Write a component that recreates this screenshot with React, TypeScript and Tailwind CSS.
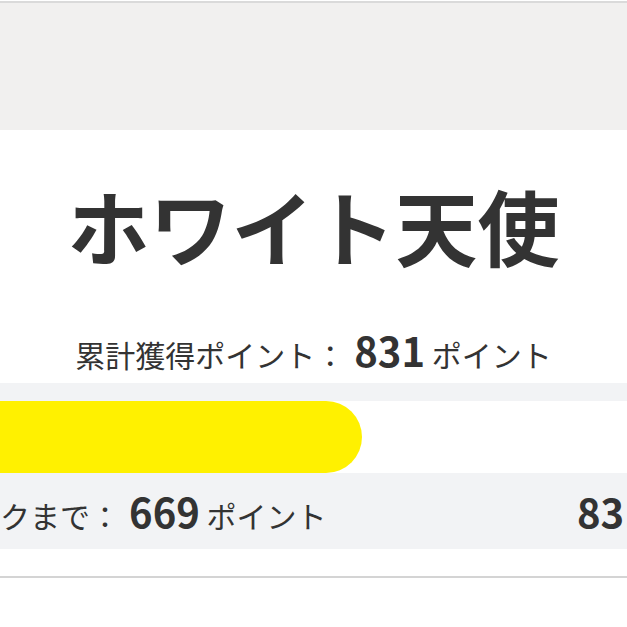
export default function App() {
  return (
    <div
      className="h-[627px] w-[627px] overflow-hidden bg-white text-[#333333]"
      style={{ fontFamily: '"Noto Sans CJK JP", "Noto Sans", sans-serif' }}
    >
      <div className="mt-px h-[2px] bg-[#dadada]" />
      <div className="h-[127px] bg-[#f1f0ef]" />

      <section className="flex flex-col items-center">
        <h1 className="mt-[54px] text-[82px] font-bold leading-none">ホワイト天使</h1>
        <p className="mt-[64px] whitespace-nowrap text-[30px] leading-none">
          累計獲得ポイント：<span className="text-[40px] font-bold"> 831</span> ポイント
        </p>
      </section>

      <div className="mt-[13px] -ml-[140px] w-[1000px] bg-[#f2f3f5] px-[18px] pt-[18px]">
        <div className="h-[72px] bg-white">
          <div className="h-full w-[484px] rounded-full bg-[#fff100]" />
        </div>
        <div className="flex h-[76px] items-center pl-[2px]">
          <div className="w-[697px] shrink-0 whitespace-nowrap text-[30px] leading-none">
            次のランクまで：<span className="text-[40px] font-bold"> 669</span> ポイント
          </div>
          <div className="whitespace-nowrap text-[40px] font-bold leading-none">831 / 1500</div>
        </div>
      </div>

      <div className="h-[27px]" />
      <div className="h-[2px] bg-[#d4d4d4]" />
    </div>
  );
}
